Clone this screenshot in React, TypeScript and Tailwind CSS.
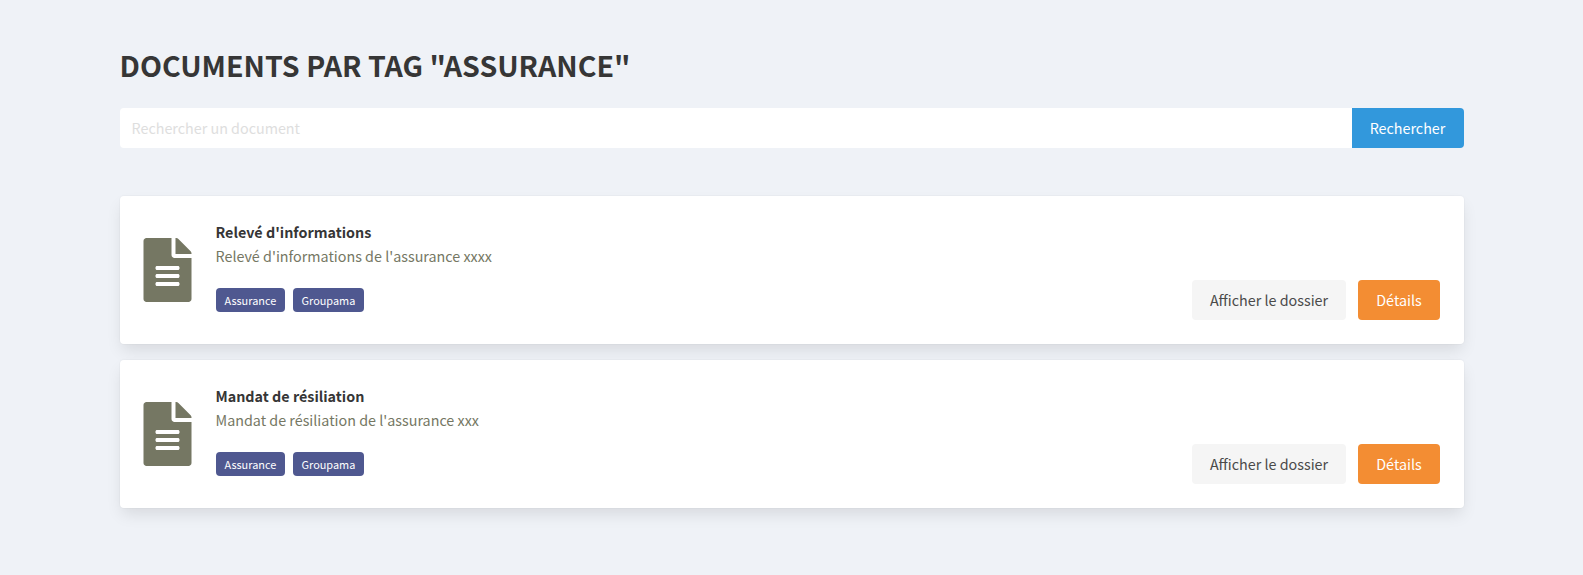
interface Doc {
  title: string;
  description: string;
  tags: string[];
}

const documents: Doc[] = [
  {
    title: "Relevé d'informations",
    description: "Relevé d'informations de l'assurance xxxx",
    tags: ["Assurance", "Groupama"],
  },
  {
    title: "Mandat de résiliation",
    description: "Mandat de résiliation de l'assurance xxx",
    tags: ["Assurance", "Groupama"],
  },
];

function FileIcon() {
  return (
    <svg viewBox="-4 0 392 512" className="-mx-[0.5px] h-16 w-[49px] shrink-0 fill-[#757763]" aria-hidden="true">
      <path d="M224 136V0H24C10.700 0 0 10.700 0 24v464c0 13.300 10.700 24 24 24h336c13.300 0 24-10.700 24-24V160H248c-13.200 0-24-10.800-24-24zm64 236c0 6.600-5.400 12-12 12H108c-6.600 0-12-5.400-12-12v-8c0-6.600 5.400-12 12-12h168c6.600 0 12 5.400 12 12v8zm0-64c0 6.600-5.400 12-12 12H108c-6.600 0-12-5.400-12-12v-8c0-6.600 5.400-12 12-12h168c6.600 0 12 5.400 12 12v8zm0-72v8c0 6.600-5.400 12-12 12H108c-6.600 0-12-5.400-12-12v-8c0-6.600 5.400-12 12-12h168c6.600 0 12 5.400 12 12zm96-114.100v6.100H256V0h6.100c6.400 0 12.500 2.500 17 7l97.900 98c4.500 4.500 7 10.600 7 16.900z" />
    </svg>
  );
}

function DocumentCard({ doc }: { doc: Doc }) {
  return (
    <article className="flex h-[148px] items-center rounded bg-white px-6 shadow-[0_8px_16px_-2px_rgba(10,10,10,0.1),0_0_0_1px_rgba(10,10,10,0.02)]">
      <FileIcon />
      <div className="ml-6 h-[100px] grow">
        <h2 className="text-[14.33px] leading-6 font-bold text-[#363636]">{doc.title}</h2>
        <p className="text-[14.33px] leading-6 text-[#757763]">{doc.description}</p>
        <div className="mt-5 flex gap-2">
          {doc.tags.map((tag) => (
            <span key={tag} className="flex h-6 items-center rounded bg-[#4f5890] pt-px pr-[8.3px] pl-[9px] text-[10.9px] text-white">
              {tag}
            </span>
          ))}
        </div>
      </div>
      <div className="mb-6 flex gap-3 self-end text-[14.33px]">
        <button className="h-10 w-[154px] rounded bg-[#f5f5f5] pl-px text-[#4a4a4a]">Afficher le dossier</button>
        <button className="h-10 w-[82px] rounded bg-[#f38d33] pl-px text-white">Détails</button>
      </div>
    </article>
  );
}

export default function App() {
  return (
    <main className="min-h-[575px] bg-[#eff2f7] px-[119.5px] pt-[47px] font-['Noto_Sans_CJK_SC','Noto_Sans',sans-serif]">
      <h1 className="h-[61px] text-[28.6px] leading-9 font-bold text-[#363636] uppercase">
        Documents par tag "Assurance"
      </h1>
      <form className="flex h-10 text-[14.33px]">
        <input
          type="text"
          placeholder="Rechercher un document"
          className="grow rounded-l bg-white px-3 outline-none placeholder:text-[#dedede]"
        />
        <button type="button" className="w-28 rounded-r bg-[#3298dc] text-white">
          Rechercher
        </button>
      </form>
      <section className="mt-12 flex flex-col gap-4">
        {documents.map((doc) => (
          <DocumentCard key={doc.title} doc={doc} />
        ))}
      </section>
    </main>
  );
}
